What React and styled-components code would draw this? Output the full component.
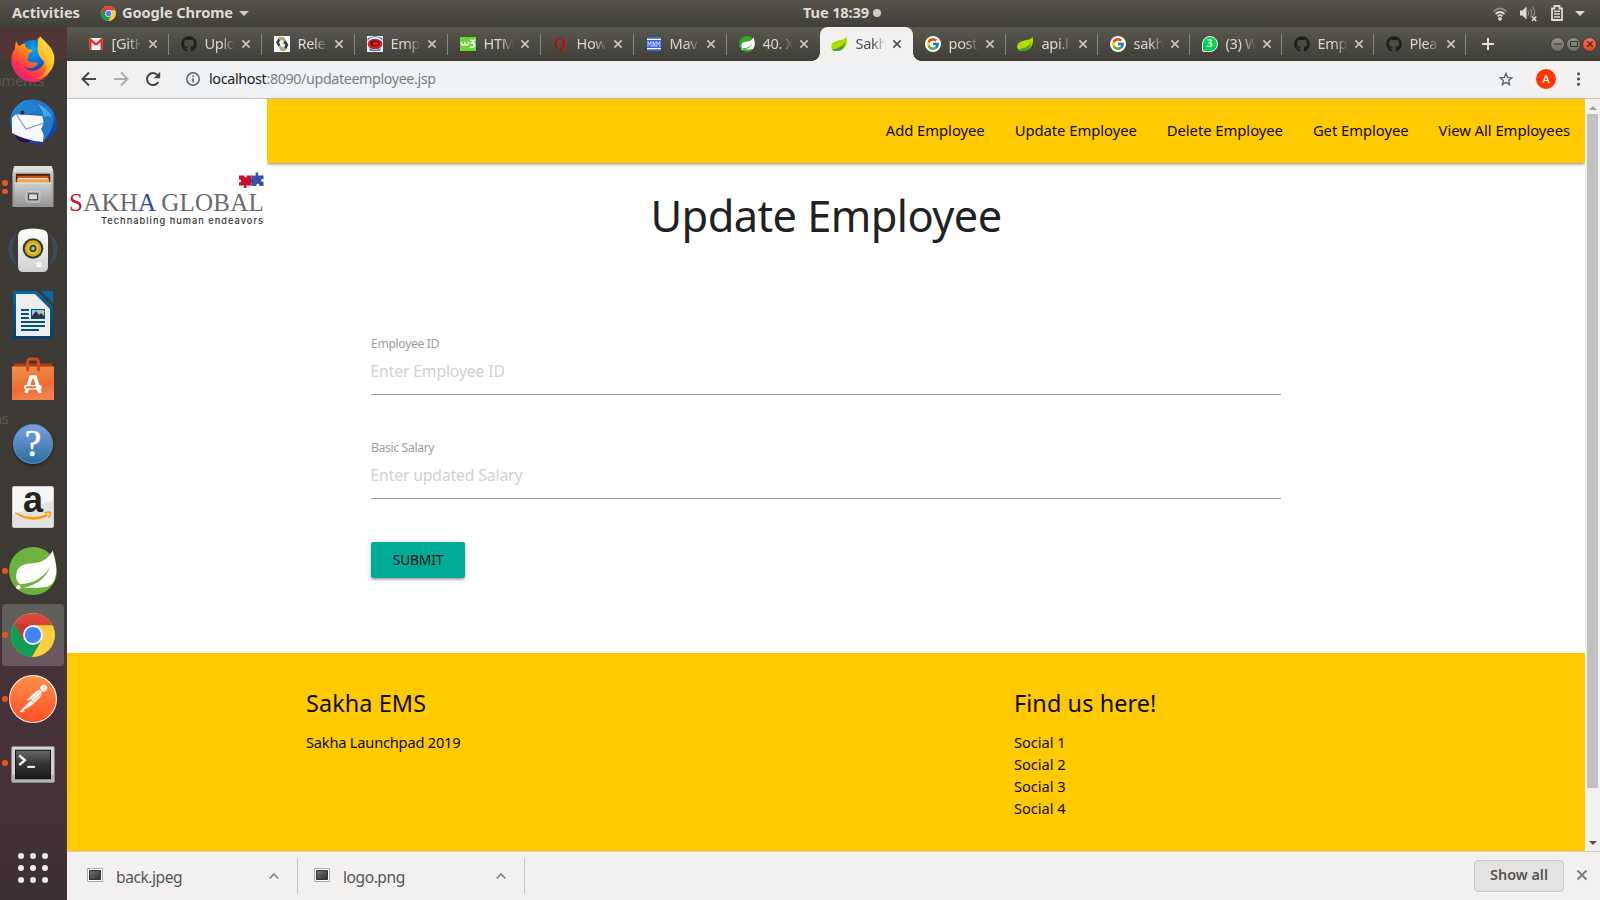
import React from 'react';
import styled, { createGlobalStyle } from 'styled-components';
import { FaGithub } from 'react-icons/fa';
import { FcGoogle } from 'react-icons/fc';
import { SiPostman } from 'react-icons/si';

const Global = createGlobalStyle`
  * { box-sizing: border-box; }
  body { margin: 0; font-family: "Noto Sans", "Open Sans", sans-serif; }
  svg { display: block; flex: none; overflow: visible; }
  a { color: inherit; text-decoration: none; }
`;

/* ---------- desktop shell ---------- */
const Desktop = styled.div`
  width: 1600px; height: 900px; overflow: hidden;
  display: flex; flex-direction: column; background: #3d3a35;
`;
const TopBar = styled.header`
  height: 27px; flex: none; display: grid; grid-template-columns: 1fr auto 1fr; align-items: center;
  padding: 0 15px 0 12px; background: linear-gradient(#57534c, #403f39);
  color: #dfdcd6; font-size: 14.6px; font-weight: 700; line-height: 23px;
`;
const TopLeft = styled.div`display: flex; align-items: center;`;
const Activities = styled.span`width: 89px; padding-bottom: 2px; letter-spacing: 0.02px;`;
const AppName = styled.span`margin: 0 6px; padding-bottom: 2px; letter-spacing: -0.08px;`;
const Clock = styled.div`
  display: flex; align-items: center; gap: 4px; letter-spacing: -0.14px; padding: 0 0 2px 87px;
`;
const Dot = styled.i`width: 8px; height: 8px; border-radius: 50%; background: #cfccc6; margin-top: 1px;`;
const TopRight = styled.div`display: flex; align-items: center; justify-content: flex-end;`;
const WifiSlot = styled.div`margin-right: 13px;`;
const SoundSlot = styled.div`margin-right: 14px;`;
const BatterySlot = styled.div`margin-right: 12px; padding-bottom: 1px;`;
const Workspace = styled.div`flex: 1; min-height: 0; display: flex;`;

/* ---------- dock ---------- */
const Dock = styled.nav`
  width: 67px; flex: none; display: flex; flex-direction: column; position: relative;
  background: linear-gradient(#513637 0, #4f3536 32px, #3e3b36 33px, #3d3a35 621px, #47323a 622px, #433138 800px, #3d2f33 873px);
`;
const DockItem = styled.div`
  height: 64px; flex: none; display: flex; align-items: center; justify-content: center; position: relative; padding-right: 1px;
`;
const DockTile = styled.div`
  width: 62px; height: 62px; border-radius: 4px; display: flex; align-items: center; justify-content: center;
  background: ${p => (p.$active ? 'rgba(255,255,255,0.19)' : 'transparent')};
`;
const Running = styled.div`
  position: absolute; left: 2px; top: 0; height: 64px; display: flex; flex-direction: column; justify-content: center; gap: 3px;
`;
const RunDot = styled.i`width: 5.5px; height: 5.5px; border-radius: 50%; background: #e95420;`;
const Ghost = styled.span`
  position: absolute; left: ${p => p.$x}px; top: ${p => p.$y}px; font-size: 15px; line-height: 20px; color: #5b5951; letter-spacing: -0.4px;
`;
const AppsGrid = styled.div`
  margin-top: auto; margin-bottom: 17px; align-self: center; display: grid; grid-template-columns: repeat(3, 6px); gap: 6px;
  padding-right: 1px; box-sizing: content-box;
`;
const AppsDot = styled.i`width: 6px; height: 6px; border-radius: 50%; background: #f0eeec;`;

/* ---------- browser ---------- */
const Browser = styled.div`flex: 1; min-width: 0; display: flex; flex-direction: column;`;
const TabStrip = styled.div`
  height: 34px; flex: none; display: flex; padding-left: 8.5px; background: linear-gradient(#5a594f, #3f3e38);
`;
const Tab = styled.div`
  width: ${p => p.$w}px; height: 34px; flex: none; display: flex; align-items: center; padding: 0 0 0 12px; position: relative;
  border-radius: ${p => (p.$active ? '8px 8px 0 0' : '0')};
  background: ${p => (p.$active ? '#f2f1ef' : 'transparent')};
  &::before, &::after {
    content: ''; display: ${p => (p.$active ? 'block' : 'none')};
    position: absolute; bottom: 0; width: 8px; height: 8px;
  }
  &::before { left: -8px; background: radial-gradient(circle at 0 0, transparent 7.5px, #f2f1ef 8px); }
  &::after { right: -8px; background: radial-gradient(circle at 100% 0, transparent 7.5px, #f2f1ef 8px); }
`;
const TabIcon = styled.div`width: 16px; height: 16px; flex: none; display: flex; align-items: center; justify-content: center;`;
const TabTitle = styled.span`
  width: 30px; margin: 0 7px 2px 8px; overflow: hidden; white-space: nowrap; font-size: 14.6px; line-height: 22px; letter-spacing: -0.35px;
  color: ${p => (p.$active ? '#4a4d51' : '#dad7d0')};
  -webkit-mask-image: linear-gradient(90deg, #000 55%, transparent);
  mask-image: linear-gradient(90deg, #000 55%, transparent);
`;
const Divider = styled.i`margin-left: auto; width: 1px; height: 21px; background: ${p => (p.$hide ? 'transparent' : '#8b8981')};`;
const NewTab = styled.div`width: 45px; display: flex; align-items: center; justify-content: center;`;
const WindowButtons = styled.div`display: flex; align-items: center; gap: 3px; margin-left: auto; padding-right: 4px;`;
const WinButton = styled.div`
  width: 13px; height: 13px; border-radius: 50%; display: flex; align-items: center; justify-content: center;
  background: ${p => (p.$close ? 'linear-gradient(#fb7350, #e4421c)' : 'linear-gradient(#93918a, #6d6c65)')};
  box-shadow: 0 0 0 0.6px #35342f;
`;
const Toolbar = styled.div`
  height: 38px; flex: none; display: flex; align-items: center; padding: 0 14px 1px 14px;
  background: #f2f1ef; border-bottom: 1px solid #c9c8c7;
`;
const NavIcons = styled.div`display: flex; gap: 16px; width: 94px;`;
const UrlBar = styled.div`
  flex: 1; height: 28px; border-radius: 14px; background: #eff3f5; display: flex; align-items: center; padding: 0 9px 0 11px;
`;
const Url = styled.span`
  margin-left: 9px; flex: 1; font-size: 14.3px; color: #7b7f84; letter-spacing: -0.38px; line-height: 22px;
`;
const Host = styled.span`color: #202124; letter-spacing: -0.33px;`;
const Avatar = styled.div`
  width: 20px; height: 20px; border-radius: 50%; background: #ff3503; color: #fff; margin: 0 18px 0 14px;
  font-size: 11px; line-height: 20px; text-align: center; font-weight: 500;
`;
const View = styled.div`height: 752px; flex: none; display: flex;`;

/* ---------- web page ---------- */
const Page = styled.main`flex: 1; display: flex; flex-direction: column; background: #fff; min-width: 0;`;
const Header = styled.div`height: 64px; flex: none; display: flex; align-items: flex-start;`;
const Logo = styled.div`width: 200px; height: 130px; flex: none; background: #fff; padding: 73px 0 0 2px; position: relative; z-index: 1;`;
const PuzzleSlot = styled.div`display: flex; justify-content: flex-end; padding-right: 3px; height: 17px;`;
const LogoName = styled.div`
  font-family: "Liberation Serif", serif; font-size: 25px; line-height: 27px; height: 26px; letter-spacing: 0.22px; color: #6a6a6c; white-space: nowrap;
`;
const Red = styled.span`color: #c8102e;`;
const Blue = styled.span`color: #2b4aa0;`;
const Tagline = styled.div`
  font-family: Inter, sans-serif; font-weight: 500; font-size: 9.2px; line-height: 12px; letter-spacing: 1.04px; color: #333; padding-left: 32px; white-space: nowrap;
`;
const Menu = styled.nav`
  flex: 1; height: 64px; background: #ffca00; display: flex; justify-content: flex-end; align-items: center;
  box-shadow: 0 2px 2px 0 rgba(0,0,0,.14), 0 3px 1px -2px rgba(0,0,0,.12), 0 1px 5px 0 rgba(0,0,0,.2);
`;
const MenuLink = styled.a`padding: 0 15px; font-size: 14.8px; letter-spacing: -0.04px; color: #0d0b00; line-height: 62px; height: 64px; white-space: nowrap;`;
const Title = styled.h1`
  margin: 0; padding-top: 24px; height: 174px; text-align: center; font-weight: 400; font-size: 43.4px; line-height: 58px; letter-spacing: -0.58px; color: #212121;
`;
const Form = styled.form`margin-left: 304px; width: 910px; height: 316px;`;
const Field = styled.label`display: block; height: 104px; & + & { height: 101px; }`;
const FieldLabel = styled.span`display: block; height: 14px; font-size: 12.2px; line-height: 14px; letter-spacing: -0.36px; color: #9e9e9e;`;
const FieldInput = styled.input`
  display: block; width: 100%; height: 44px; border: 0; border-bottom: 1px solid #9b9b9b; padding: 0 0 3px; outline: 0; background: none;
  font: 400 15.7px "Noto Sans", sans-serif; letter-spacing: -0.12px; text-indent: -0.5px;
  &::placeholder { color: #d1d1d1; opacity: 1; }
`;
const Submit = styled.button`
  width: 94px; height: 36px; border: 0; border-radius: 2px; background: #00ab97; color: #06110f; padding: 0;
  font: 400 13.8px/36px "Noto Sans", sans-serif; letter-spacing: -0.2px;
  box-shadow: 0 2px 2px 0 rgba(0,0,0,.14), 0 3px 1px -2px rgba(0,0,0,.12), 0 1px 5px 0 rgba(0,0,0,.2);
`;
const Footer = styled.footer`
  flex: 1; background: #ffca00; color: #0d0b00; display: grid; grid-template-columns: 708px 1fr; padding: 32px 0 0 239px;
`;
const FooterTitle = styled.h5`margin: 0 0 10px; font-weight: 400; font-size: 23.4px; line-height: 36px; letter-spacing: 0.1px;`;
const FooterLine = styled.div`font-size: 14.6px; line-height: 22px; letter-spacing: ${p => (p.$loose ? '-0.02px' : '-0.19px')};`;

const Scrollbar = styled.div`
  width: 15px; flex: none; background: #f1f1f1; display: flex; flex-direction: column; align-items: center; justify-content: space-between; padding: 7px 0 6px;
`;
const Thumb = styled.div`width: 11px; height: 674px; background: #c1c1c1; margin-top: 4px; margin-bottom: auto;`;

/* ---------- downloads ---------- */
const Shelf = styled.div`flex: 1; background: #f2f1ef; border-top: 1px solid #cfcecd; display: flex; align-items: center;`;
const Download = styled.div`
  width: ${p => p.$w}px; height: 36px; display: flex; align-items: center; padding: 0 18.5px 0 ${p => p.$pad}px; border-right: 1px solid #c6c5c4;
`;
const FileIcon = styled.div`padding-bottom: 2px;`;
const FileName = styled.span`
  margin-left: 13px; flex: 1; font-size: 15.6px; line-height: 24px; color: #555458; letter-spacing: -0.46px; padding-top: 2px;
`;
const ShowAll = styled.button`
  margin-left: auto; width: 90px; height: 32px; border: 1px solid #cac9c8; border-radius: 4px; background: #e5e3e1; padding: 0 0 3px;
  font: 600 14.4px "Noto Sans", sans-serif; color: #555; letter-spacing: 0;
`;
const CloseSlot = styled.div`width: 36px; display: flex; justify-content: center; padding-bottom: 2px;`;

/* ---------- small icons ---------- */
const Cross = ({ s = 8, c, w = 1.8 }) => (
  <svg width={s} height={s} viewBox="0 0 8 8"><path d="M.4.4l7.2 7.2M7.6.4L.4 7.6" stroke={c} strokeWidth={w} fill="none" /></svg>
);
const Caret = ({ w = 10, h = 5, c, up }) => (
  <svg width={w} height={h} viewBox="0 0 10 5"><path d={up ? 'M0 5L5 0l5 5z' : 'M0 0h10L5 5z'} fill={c} /></svg>
);
const Chrome = ({ s }) => (
  <svg width={s} height={s} viewBox="0 0 44 44">
    <defs>
      <linearGradient id="cr" x1="0" y1="0" x2="0" y2="1"><stop offset="0" stopColor="#dd4b3e" /><stop offset="1" stopColor="#cf3a2d" /></linearGradient>
    </defs>
    <circle cx="22" cy="22" r="22" fill="#ffcd40" />
    <path d="M3.500 10.200A22 22 0 0 0 21 44l9.600-17H13.500z" fill="#0f9d58" />
    <path d="M3.500 10.500A22 22 0 0 1 41.700 12.200H22L12.500 26.500z" fill="url(#cr)" />
    <path d="M3.500 10.200l9 16.300L22 12z" fill="#c53a2c" />
    <circle cx="22" cy="22" r="10" fill="#f1f1f1" />
    <circle cx="22" cy="22" r="8.100" fill="#4285f4" />
  </svg>
);
const Wifi = () => (
  <svg width="14" height="14" viewBox="0 0 14 14" fill="none" strokeWidth="1.7">
    <path d="M.5 4.600Q7-1.600 13.500 4.600" stroke="#8b8881" /><path d="M2.600 7Q7 3 11.400 7" stroke="#dedbd5" /><path d="M4.500 9.300Q7 7 9.500 9.300" stroke="#dedbd5" />
    <circle cx="7" cy="11.800" r="1.900" fill="#dedbd5" />
  </svg>
);
const Sound = () => (
  <svg width="17" height="16" viewBox="0 0 17 16" fill="none">
    <path d="M0 4.500h2.500L6.500.5v13L2.500 9.500H0z" fill="#dedbd5" />
    <path d="M8 4.500q1.600 2.500 0 5M10.300 2.800q2.800 4.200 0 8.400M12.600 1q4 6 .5 9" stroke="#8b8881" strokeWidth="1.300" />
    <path d="M12 10.500l4.200 4.500M16.200 10.500L12 15" stroke="#dedbd5" strokeWidth="1.700" />
  </svg>
);
const Battery = () => (
  <svg width="12" height="16" viewBox="0 0 12 16" fill="none" stroke="#dedbd5">
    <path d="M1 3.500h2.500V1h5v2.500H11V15H1z" strokeWidth="1.800" /><path d="M3 6.300h6M3 9.100h6M3 11.900h6" strokeWidth="1.500" />
  </svg>
);
const Gmail = () => (
  <svg width="14" height="12" viewBox="0 0 14 12"><path d="M0 0h14v12H0z" fill="#f2f2f2" /><path d="M1.300 12V1.500L7 6.500l5.700-5V12" fill="none" stroke="#e02c20" strokeWidth="2.300" /></svg>
);
const Release = () => (
  <svg width="16" height="16" viewBox="0 0 16 16">
    <path d="M0 0h16v16H0z" fill="#fff" />
    <path d="M5 1h5l2 3.500-2 3.500H8l1.500-3.500H5.500L4 2.500z" fill="#b8a76a" />
    <path d="M4.500 2.200L2 6.500 4.800 11l1.500-2.200L5 6.500l1-1.800z" fill="#2b4256" />
    <path d="M10.500 5l1.500-.5L14.500 9 12 13.500l-2-2.200L11.200 9 10 7z" fill="#2b4256" />
    <path d="M6.500 9.200l1.200 2h3L12 14l-1 1H7L4.800 11.500z" fill="#b8a76a" />
  </svg>
);
const RedEye = () => (
  <svg width="16" height="16" viewBox="0 0 16 16">
    <path d="M0 0h16v16H0z" fill="#eef3fb" /><path d="M0 5Q8-3 16 5L15 2 8 0 1 2z" fill="#3e78c8" /><ellipse cx="8" cy="8" rx="7.400" ry="5.300" fill="#d81e1e" />
    <ellipse cx="8" cy="7.500" rx="4.600" ry="3" fill="#3a1012" /><ellipse cx="8.500" cy="7.400" rx="3.200" ry="2" fill="#d8201a" />
    <path d="M2 12q6 4 12 0l-1 3H3z" fill="#3e78c8" />
  </svg>
);
const W3 = () => (
  <svg width="16" height="14" viewBox="0 0 16 14">
    <path d="M0 0h16v14H0z" fill="#6cd637" />
    <path d="M1.200 5q0 3 1.800 3t1.800-2.800q0 2.800 1.800 2.800t2.200-3" fill="none" stroke="#fff" strokeWidth="1.500" />
    <path d="M10 3.500h4.200L12 6q2.500-.3 2.500 2.200T10 10.300" fill="none" stroke="#fff" strokeWidth="1.500" />
  </svg>
);
const QuoraMark = styled.span`font: 700 16px/16px "Liberation Serif", serif; color: #b3120e;`;
const Maven = () => (
  <svg width="14" height="14" viewBox="0 0 14 14">
    <path d="M0 0h14v14H0z" fill="#3a62e0" /><path d="M0 2.300h14M0 11.700h14" stroke="#fff" strokeWidth="1.200" />
    <path d="M1 10V4.500l1.500 3 1.500-3V10M6 10V4.500l2 5V4.500M9.800 10V4.500l1.500 3 1.500-3V10" fill="none" stroke="#dfe7ff" strokeWidth=".8" />
  </svg>
);
const SpringRound = ({ s, c = '#6cb33e' }) => (
  <svg width={s} height={s} viewBox="0 0 48 48">
    <circle cx="24" cy="24" r="24" fill={c} />
    <path d="M43.500 3.500C41 9.500 36 13.500 29 15.500 20 17.300 10 15.500 7.500 26c-1 5 .7 9 3.500 11.300C22 36.500 33 33 41 20c-4 10-12 18.500-27 20.500 10 .5 19 .5 25-1 7-3 9-12 8-21-.6-6-2-10.500-3.500-15z" fill="#fff" />
    <circle cx="9.500" cy="40.300" r="2.200" fill="#fff" />
  </svg>
);
const Leaf = () => (
  <svg width="17" height="16" viewBox="0 0 17 16">
    <path d="M15.600.8C17 6 15.500 15 5 15c-2.500 0-4.500-.8-4.800-4C0 4 9 5 13 3c1.300-.7 2-1.300 2.600-2.200z" fill="#aedb00" />
    <path d="M14 6C11.500 11 7 12.500 1 13.200c1.500 2 5 2 7 1.600C12 14 13.500 11 14 6z" fill="#4f9d2f" />
  </svg>
);
const GoogleBadge = styled.div`
  width: 16px; height: 16px; border-radius: 50%; background: #fff; display: flex; align-items: center; justify-content: center;
`;
const WhatsBadge = styled.div`
  width: 16px; height: 16px; border-radius: 8px 8px 8px 2px; border: 1.5px solid #fff; background: #00d34d; color: #fff;
  font-size: 10px; font-weight: 600; line-height: 13px; text-align: center;
`;
const Puzzle = () => (
  <svg width="25" height="18" viewBox="0 0 25 18">
    <path d="M0 3.500h12.500v10H7.500c-.5 1 .3 1.500.1 2.500h-2.800c-.3-1 .5-1.500.2-2.500H0V10.200c1.200.3 2 .2 2-1.200S1.200 7.400 0 7.700z" fill="#c8102e" />
    <path d="M12.500 3.500h4.300c.4-1-.6-1.500-.2-3h2.600c.4 1.500-.5 2-.1 3H24.500v3.800c-1.300-.4-2.200-.2-2.200 1.200s1 1.400 2.200 1V14h-4.200c.3-1.400-.2-2.300-1.500-2.300s-1.600 1-1.300 2.300h-5z" fill="#3953a4" />
    <path d="M5 3.300c.3 1.500.5 2.200 1.600 2.200S8 4.600 7.800 3.300z" fill="#fff" /><circle cx="12.200" cy="8.800" r="1.500" fill="#2d3f94" />
  </svg>
);
const ImageFile = () => (
  <svg width="16" height="14" viewBox="0 0 16 14">
    <defs><linearGradient id="im" x1="0" y1="0" x2="1" y2="1"><stop offset="0" stopColor="#777" /><stop offset="1" stopColor="#2c2c2c" /></linearGradient></defs>
    <path d="M.5.5h15v13H.5z" fill="#fff" stroke="#aaa" /><path d="M2.500 2.500h11v9h-11z" fill="url(#im)" stroke="#333" />
  </svg>
);
const UpChevron = () => (
  <svg width="10" height="6" viewBox="0 0 10 6"><path d="M.7 5.500L5 1l4.300 4.500" fill="none" stroke="#828282" strokeWidth="1.600" /></svg>
);

/* ---------- dock icons ---------- */
const Firefox = () => (
  <svg width="44" height="46" viewBox="0 0 44 47">
    <defs>
      <linearGradient id="ff1" x1=".8" y1="0" x2=".2" y2="1"><stop offset="0" stopColor="#ffd42a" /><stop offset=".35" stopColor="#ff980e" /><stop offset=".7" stopColor="#ff3647" /><stop offset="1" stopColor="#e31587" /></linearGradient>
      <linearGradient id="ff2" x1="1" y1="0" x2=".4" y2="1"><stop offset="0" stopColor="#fff44f" /><stop offset=".6" stopColor="#ffbd27" /><stop offset="1" stopColor="#ff7a1a" /></linearGradient>
      <radialGradient id="ff3" cx=".5" cy=".3" r=".8"><stop offset="0" stopColor="#00a8f0" /><stop offset=".6" stopColor="#0a5fd0" /><stop offset="1" stopColor="#3a1e8a" /></radialGradient>
    </defs>
    <circle cx="22" cy="21" r="17" fill="url(#ff3)" />
    <path d="M5 5c.5 2 1.500 4 3 5.500C10 8.500 12 8 14 8c-.5 2 .5 3.500 2 5 2 1 5 .5 5.500 1.500-.5 2-3.500 3-4 4.500-.2 1.500.5 3-1.500 5.500 3 3.500 8 1.500 11 3.500-3 6-13 7-16 0 4 9 16 10 21 2 3-5 1-10-2-14-4-5-3-11-3-14 6 3 13 10 13.500 18C44.500 35 34 47 22 47S0 37 0 25C0 19 1.500 16 3.500 13 3.500 10 4 7 5 5z" fill="url(#ff1)" />
    <path d="M29 0c4 5 12 10 14.500 19.500C46 33 36 44 24 44c9-3 13-9 11-15-1-4-7-6-8-13-1-6 1-11 2-16z" fill="url(#ff2)" />
  </svg>
);
const Thunderbird = () => (
  <svg width="48" height="48" viewBox="0 0 48 48">
    <defs><linearGradient id="tb" x1="0" y1="0" x2=".6" y2="1"><stop offset="0" stopColor="#2da5e8" /><stop offset=".5" stopColor="#1a5fc0" /><stop offset="1" stopColor="#1b3a90" /></linearGradient></defs>
    <path d="M14 2C26-2 40 4 45 14c3 7 4 14 1 21l-3-1c0 4-3 7-6 8l-1-3c-1 4-4 7-7 8l-4-3c-9 1-17-4-21-11C-1 25 1 12 9 6z" fill="url(#tb)" />
    <path d="M5 34c3 8 9 11 16 9l-3-8z" fill="#261352" />
    <path d="M3 19L7 15 34 17 37 24 34 43C23 42 12 39 3 34z" fill="#f6f8fb" />
    <path d="M7 15l10 15 18-6" fill="none" stroke="#8f99a8" strokeWidth="1.200" />
    <path d="M20 1c8-2 18 3 24 12 2 8 0 18-10 30 2-5 0-9-2-13 3-4 3-9 1-13-5-3-11-2-17-1 4-3 5-7 4-15z" fill="#2178cc" />
    <path d="M28 5c7 2 12 7 15 13-3-1-5-1-8 0-1-5-3-9-7-13z" fill="#42a7e6" />
    <path d="M17 1c-5 4-5 9-10 14 9 2 14 0 22-4-1-5-6-9-12-10z" fill="#2481d3" /><circle cx="13.500" cy="13.500" r="2" fill="#10274a" />
  </svg>
);
const Files = () => (
  <svg width="42" height="44" viewBox="0 0 42 45">
    <defs><linearGradient id="fg" x1="0" y1="0" x2="0" y2="1"><stop offset="0" stopColor="#cfcfcf" /><stop offset="1" stopColor="#929292" /></linearGradient></defs>
    <path d="M2 1h38q2 3 2 8v34H0V9q0-5 2-8z" fill="url(#fg)" /><path d="M2 1h38l1 6H1z" fill="#dedede" />
    <path d="M3.500 9h35v10h-35z" fill="#4b1d0b" /><path d="M5 11h32v8H5z" fill="#c8521b" /><path d="M4.500 14h33v5h-33z" fill="#f2a24d" /><path d="M6 14h30" stroke="#fff" />
    <path d="M2 18h38v25H2z" fill="url(#fg)" /><path d="M2 18.500h38" stroke="#e6e6e6" />
    <rect x="14" y="27" width="14" height="11" rx="2" fill="#a4a4a4" stroke="#d3d3d3" /><rect x="16.500" y="29.500" width="9" height="6" fill="#ddd" stroke="#3a3a3a" />
  </svg>
);
const Rhythmbox = () => (
  <svg width="48" height="46" viewBox="0 0 48 46">
    <defs><linearGradient id="rb" x1="0" y1="0" x2="0" y2="1"><stop offset="0" stopColor="#fff" /><stop offset="1" stopColor="#cfcfcf" /></linearGradient></defs>
    <path d="M7 6q-9 15 0 30M41 6q9 15 0 30M3.500 9q-6 12 0 24M44.500 9q6 12 0 24" fill="none" stroke="#3b5068" strokeWidth="1.500" />
    <path d="M13 2q11-3 22 0 4 1 4 8v28q0 6-5 6H14q-5 0-5-6V10q0-7 4-8z" fill="url(#rb)" />
    <circle cx="24" cy="20.500" r="10.300" fill="#333" /><circle cx="24" cy="20.500" r="8.300" fill="#d4ab0a" /><circle cx="24" cy="20.500" r="5.500" fill="#e7cd3c" />
    <circle cx="24" cy="20.500" r="3.700" fill="#42464a" /><circle cx="24" cy="20.500" r="1.700" fill="#b7bcc0" /><rect x="26.500" y="33" width="7" height="7" rx="2" fill="#f4f4f4" stroke="#bbb" strokeWidth=".6" />
  </svg>
);
const Writer = () => (
  <svg width="40" height="48" viewBox="0 0 40 48">
    <defs><linearGradient id="wr" x1="0" y1="0" x2="0" y2="1"><stop offset="0" stopColor="#0369a3" /><stop offset="1" stopColor="#043e66" /></linearGradient></defs>
    <path d="M2 0h22l16 16v30q0 2-2 2H2q-2 0-2-2V2q0-2 2-2z" fill="url(#wr)" /><path d="M28 0h12v12z" fill="#0669a8" />
    <path d="M3 3h19l15 15v27H3z" fill="#ededed" />
    <path d="M8 19h8M8 23h8M8 27h8M8 31h24M8 35h24M8 39h18" stroke="#04507f" strokeWidth="2" />
    <path d="M18 18h14v10H18z" fill="#04507f" /><path d="M19 19h12v8H19z" fill="#8ccdf0" /><path d="M19 27v-2l4-5 3 4 2-2 3 3v2z" fill="#333" /><circle cx="30" cy="20.500" r="1.500" fill="#e8c33c" />
  </svg>
);
const Software = () => (
  <svg width="42" height="44" viewBox="0 0 42 44">
    <defs><linearGradient id="sw" x1="0" y1="0" x2=".3" y2="1"><stop offset="0" stopColor="#e89350" /><stop offset=".7" stopColor="#ee6b32" /><stop offset="1" stopColor="#f4814c" /></linearGradient></defs>
    <path d="M2 6.500h38l1 4H1z" fill="#b23c10" /><path d="M0 9.500h42V43H0z" fill="url(#sw)" />
    <path d="M15.500 14V6q0-4 3-4h5q3 0 3 4v8" fill="none" stroke="#d4481a" strokeWidth="3" />
    <path d="M14 36l5-16h4l5 16" fill="none" stroke="#fff" strokeWidth="3.600" /><rect x="12" y="28" width="18" height="4.500" rx="2" fill="#fff" /><path d="M14 30.200h10" stroke="#f06a10" strokeWidth="1.800" />
  </svg>
);
const HelpBall = styled.div`
  width: 40px; height: 40px; margin-top: 2px; border-radius: 50%; border: 1.500px solid #5d8fcb; background: linear-gradient(#7aa2dc, #2d6ea3);
  box-shadow: 0 2px 3px rgba(0,0,0,.4); color: #fff; text-align: center; font: 400 37px/37px "Liberation Serif", serif; -webkit-text-stroke: 0.6px #fff;
`;
const AmazonTile = styled.div`
  width: 42px; height: 42px; border-radius: 2px; background: linear-gradient(160deg, #f6f6f6 50%, #e2e2e2 51%); border: 1px solid #cfcfcf;
  display: flex; flex-direction: column; align-items: center; color: #222; font: 700 36px/25px "Liberation Sans", sans-serif;
`;
const Smile = () => (
  <svg width="36" height="9" viewBox="0 0 36 9"><path d="M.3.8Q17 9.500 31.500 2.800L32 3.600Q16 12 .3.800z" fill="#ff9a00" stroke="#ff9a00" strokeWidth="1.300" /><path d="M29.500.8q5-1.300 6 0 .2 2-2 5" fill="none" stroke="#ff9a00" strokeWidth="1.700" /></svg>
);
const PostmanBall = styled.div`
  width: 48px; height: 48px; border-radius: 50%; background: #fff; display: flex; align-items: center; justify-content: center;
  path { fill: url(#pm); }
`;
const PostmanFill = () => (
  <svg width="0" height="0"><defs><linearGradient id="pm" x1="0" y1="0" x2="0" y2="1"><stop offset="0" stopColor="#ff9248" /><stop offset="1" stopColor="#ff4f26" /></linearGradient></defs></svg>
);
const Terminal = () => (
  <svg width="46" height="37" viewBox="0 0 46 39">
    <defs><linearGradient id="tm" x1="0" y1="0" x2="0" y2="1"><stop offset="0" stopColor="#666" /><stop offset=".5" stopColor="#333" /><stop offset="1" stopColor="#1b1b1b" /></linearGradient></defs>
    <rect x=".5" y=".5" width="45" height="38" rx="1.500" fill="#d6d6d4" stroke="#8b8a88" /><path d="M1 30h44v8H1z" fill="#b5b5b3" /><path d="M4 4h38v31H4z" fill="#111" /><path d="M5 5h36v29H5z" fill="url(#tm)" />
    <path d="M8.500 10l6 5-6 5" fill="none" stroke="#f1f1f1" strokeWidth="2.500" /><path d="M17 22h8" stroke="#f1f1f1" strokeWidth="2.200" />
  </svg>
);
const Lowered = styled.div`padding-top: 3px;`;

const dock = [
  { icon: <Firefox /> }, { icon: <Thunderbird /> }, { icon: <Files />, run: 2 }, { icon: <Rhythmbox /> }, { icon: <Writer /> },
  { icon: <Software /> }, { icon: <HelpBall>?</HelpBall> }, { icon: <AmazonTile>a<Smile /></AmazonTile> },
  { icon: <SpringRound s={48} />, run: 1 }, { icon: <Chrome s={44} />, run: 1, active: true },
  { icon: <PostmanBall><PostmanFill /><SiPostman size={46} /></PostmanBall>, run: 1 }, { icon: <Lowered><Terminal /></Lowered>, run: 1 },
];
const google = <GoogleBadge><FcGoogle size={14} /></GoogleBadge>;
const github = <FaGithub size={16} color="#1f1f1d" />;
const tabs = [
  ['[GitH', <Gmail />], ['Uplo', github], ['Rele', <Release />], ['Emp', <RedEye />], ['HTM', <W3 />],
  ['How', <QuoraMark>Q</QuoraMark>], ['Mav', <Maven />], ['40. X', <SpringRound s={16} c="#35a82c" />], ['Sakh', <Leaf />],
  ['post', google], ['api.l', <Leaf />], ['sakh', google], ['(3) W', <WhatsBadge>3</WhatsBadge>], ['Emp', github], ['Plea', github],
];

export default function App() {
  return (
    <Desktop>
      <Global />
      <TopBar>
        <TopLeft>
          <Activities>Activities</Activities>
          <Chrome s={15} />
          <AppName>Google Chrome</AppName>
          <Caret c="#cfccc6" />
        </TopLeft>
        <Clock>Tue 18:39<Dot /></Clock>
        <TopRight>
          <WifiSlot><Wifi /></WifiSlot>
          <SoundSlot><Sound /></SoundSlot>
          <BatterySlot><Battery /></BatterySlot>
          <Caret c="#dedbd5" />
        </TopRight>
      </TopBar>
      <Workspace>
        <Dock>
          <Ghost $x={-7.500} $y={43}>uments</Ghost>
          <Ghost $x={-7} $y={381}>ns</Ghost>
          {dock.map((d, i) => (
            <DockItem key={i}>
              {d.run && <Running>{Array.from({ length: d.run }, (_, k) => <RunDot key={k} />)}</Running>}
              <DockTile $active={d.active}>{d.icon}</DockTile>
            </DockItem>
          ))}
          <AppsGrid>{Array.from({ length: 9 }, (_, k) => <AppsDot key={k} />)}</AppsGrid>
        </Dock>
        <Browser>
          <TabStrip>
            {tabs.map(([title, icon], i) => (
              <Tab key={i} $w={i < 10 ? 93 : 92} $active={i === 8}>
                <TabIcon>{icon}</TabIcon>
                <TabTitle $active={i === 8}>{title}</TabTitle>
                <Cross s={8} c={i === 8 ? '#4a4d51' : '#cbc8c1'} w={1.600} />
                <Divider $hide={i === 7 || i === 8} />
              </Tab>
            ))}
            <NewTab>
              <svg width="12" height="12" viewBox="0 0 12 12"><path d="M6 0v12M0 6h12" stroke="#e4e1db" strokeWidth="2" /></svg>
            </NewTab>
            <WindowButtons>
              <WinButton><svg width="8" height="8" viewBox="0 0 8 8"><path d="M0 4h8" stroke="#33322d" /></svg></WinButton>
              <WinButton><svg width="8" height="8" viewBox="0 0 8 8"><path d="M.5 1.500h7v5h-7z" stroke="#33322d" fill="none" /></svg></WinButton>
              <WinButton $close><Cross s={6} c="#3a1d12" w={1.600} /></WinButton>
            </WindowButtons>
          </TabStrip>
          <Toolbar>
            <NavIcons>
              <svg width="16" height="16" viewBox="0 0 16 16"><path d="M15 8H2M8 1.500L1.500 8 8 14.500" fill="none" stroke="#45474a" strokeWidth="2" /></svg>
              <svg width="16" height="16" viewBox="0 0 16 16"><path d="M1 8h13M8 1.500L14.500 8 8 14.500" fill="none" stroke="#b0afae" strokeWidth="2" /></svg>
              <svg width="16" height="16" viewBox="0 0 16 16"><path d="M13.300 11A6 6 0 1 1 12.600 4.200L14 5.800" fill="none" stroke="#45474a" strokeWidth="2" /><path d="M15.200.8v6.400H8.800z" fill="#45474a" /></svg>
            </NavIcons>
            <UrlBar>
              <svg width="14" height="14" viewBox="0 0 14 14"><circle cx="7" cy="7" r="6.200" fill="none" stroke="#5f6368" strokeWidth="1.500" /><path d="M7 6.200v4.300M7 3.300v1.700" stroke="#5f6368" strokeWidth="1.600" /></svg>
              <Url><Host>localhost</Host>:8090/updateemployee.jsp</Url>
              <svg width="14" height="14" viewBox="0 0 24 24"><path d="M12 2.500l2.800 6.700 7.200.6-5.500 4.700 1.700 7-6.200-3.700-6.200 3.700 1.700-7L2 9.800l7.200-.6z" fill="none" stroke="#5f6368" strokeWidth="2.300" /></svg>
            </UrlBar>
            <Avatar>A</Avatar>
            <svg width="12" height="14" viewBox="0 0 12 14" fill="#45474a"><circle cx="4.500" cy="1.700" r="1.500" /><circle cx="4.500" cy="7" r="1.500" /><circle cx="4.500" cy="12.300" r="1.500" /></svg>
          </Toolbar>
          <View>
            <Page>
              <Header>
                <Logo>
                  <PuzzleSlot><Puzzle /></PuzzleSlot>
                  <LogoName><Red>S</Red>AKH<Blue>A</Blue> GLOBAL</LogoName>
                  <Tagline>Technabling human endeavors</Tagline>
                </Logo>
                <Menu>
                  <MenuLink>Add Employee</MenuLink>
                  <MenuLink>Update Employee</MenuLink>
                  <MenuLink>Delete Employee</MenuLink>
                  <MenuLink>Get Employee</MenuLink>
                  <MenuLink>View All Employees</MenuLink>
                </Menu>
              </Header>
              <Title>Update Employee</Title>
              <Form>
                <Field><FieldLabel>Employee ID</FieldLabel><FieldInput placeholder="Enter Employee ID" /></Field>
                <Field><FieldLabel>Basic Salary</FieldLabel><FieldInput placeholder="Enter updated Salary" /></Field>
                <Submit type="button">SUBMIT</Submit>
              </Form>
              <Footer>
                <div>
                  <FooterTitle>Sakha EMS</FooterTitle>
                  <FooterLine>Sakha Launchpad 2019</FooterLine>
                </div>
                <div>
                  <FooterTitle>Find us here!</FooterTitle>
                  {[1, 2, 3, 4].map(n => <FooterLine key={n} $loose>Social {n}</FooterLine>)}
                </div>
              </Footer>
            </Page>
            <Scrollbar>
              <Caret w={8} h={4} c="#a3a3a3" up />
              <Thumb />
              <Caret w={8} h={4} c="#505050" />
            </Scrollbar>
          </View>
          <Shelf>
            <Download $w={231} $pad={20}><FileIcon><ImageFile /></FileIcon><FileName>back.jpeg</FileName><UpChevron /></Download>
            <Download $w={227} $pad={16}><FileIcon><ImageFile /></FileIcon><FileName>logo.png</FileName><UpChevron /></Download>
            <ShowAll>Show all</ShowAll>
            <CloseSlot><Cross s={10} c="#7d7d7d" w={1.500} /></CloseSlot>
          </Shelf>
        </Browser>
      </Workspace>
    </Desktop>
  );
}
